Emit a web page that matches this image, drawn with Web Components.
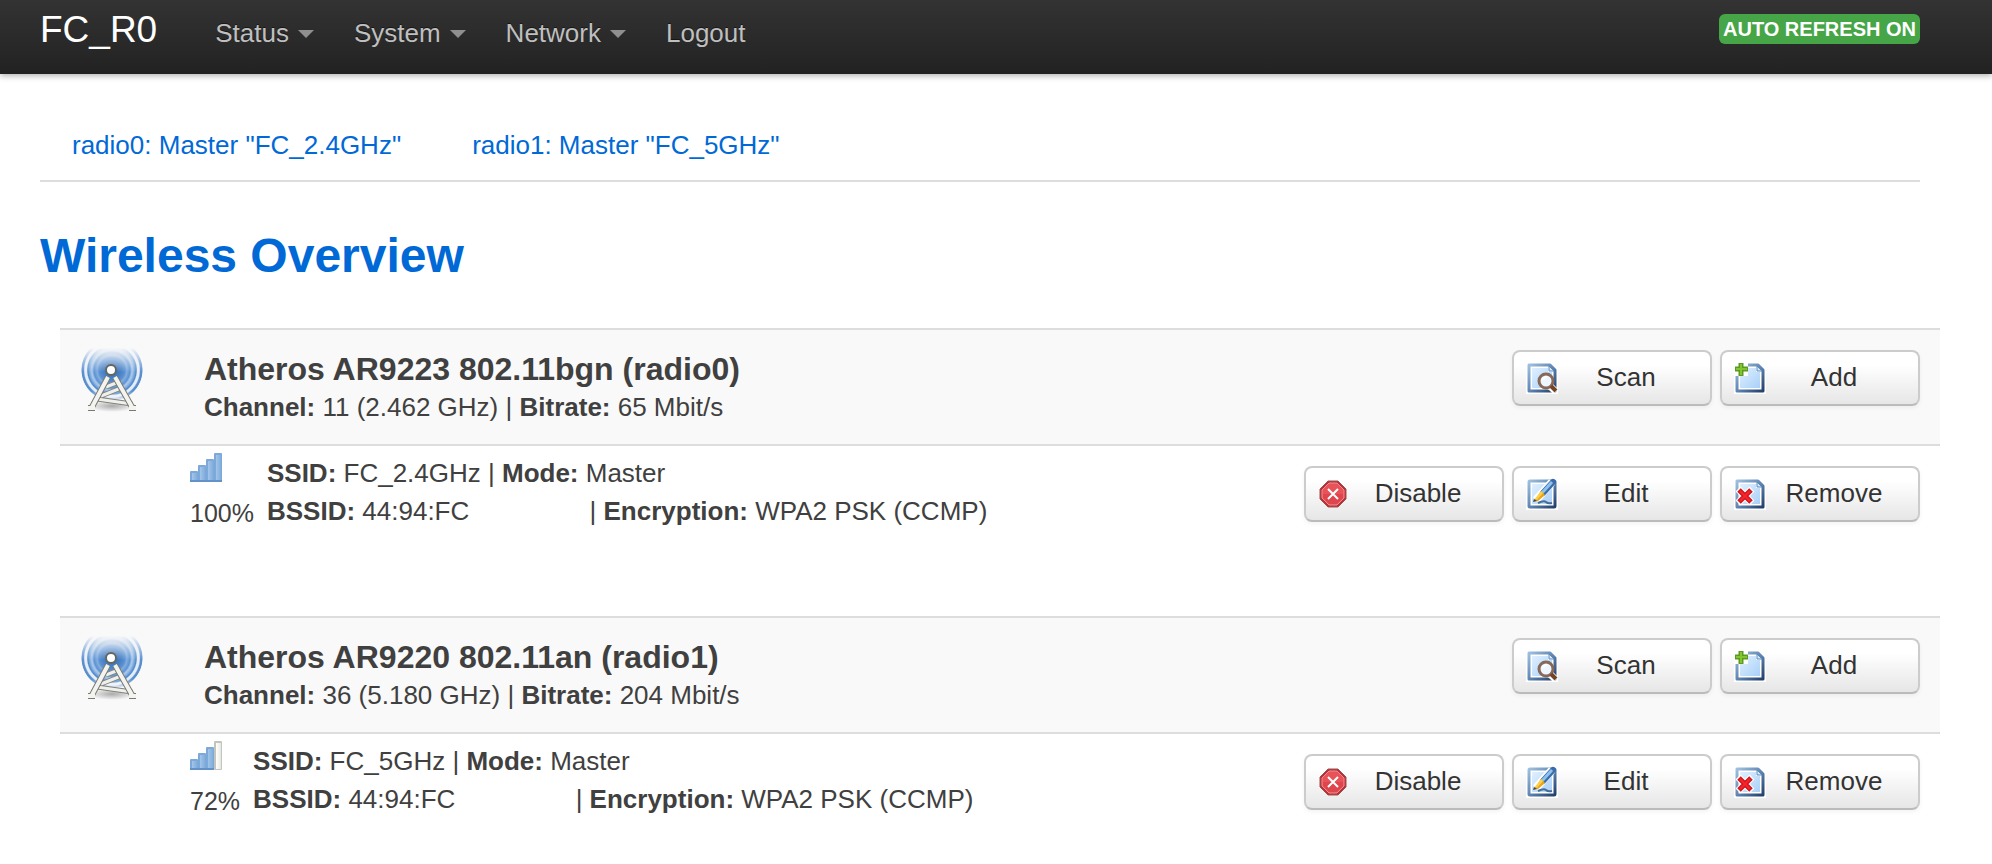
<!DOCTYPE html>
<html lang="en">
<head>
<meta charset="utf-8">
<meta name="viewport" content="width=device-width, initial-scale=1">
<title>FC_R0 - Wireless Overview</title>
<style>
  body {
    margin: 0;
    background: #fff;
    color: #404040;
    font: 26px/38px "Liberation Sans", Arial, sans-serif;
  }
  main {
    padding: 38px 72px 0 40px;
  }
  h2 {
    margin: 38px 0 36px;
    color: #0069d6;
    font-size: 48px;
    line-height: 72px;
  }
</style>
</head>
<body>

<top-bar brand="FC_R0">
  <menu-link menu>Status</menu-link>
  <menu-link menu>System</menu-link>
  <menu-link menu>Network</menu-link>
  <menu-link>Logout</menu-link>
  <refresh-label slot="status">AUTO REFRESH ON</refresh-label>
</top-bar>

<main>
  <tab-bar>
    <tab-link>radio0: Master "FC_2.4GHz"</tab-link>
    <tab-link>radio1: Master "FC_5GHz"</tab-link>
  </tab-bar>

  <h2>Wireless Overview</h2>

  <radio-device name="Atheros AR9223 802.11bgn (radio0)" channel="11 (2.462 GHz)" bitrate="65 Mbit/s">
    <wifi-network signal="100" ssid="FC_2.4GHz" mode="Master" bssid="44:94:FC" encryption="WPA2 PSK (CCMP)"></wifi-network>
  </radio-device>

  <radio-device name="Atheros AR9220 802.11an (radio1)" channel="36 (5.180 GHz)" bitrate="204 Mbit/s">
    <wifi-network signal="72" ssid="FC_5GHz" mode="Master" bssid="44:94:FC" encryption="WPA2 PSK (CCMP)"></wifi-network>
  </radio-device>
</main>

<script>
class TopBar extends HTMLElement {
  connectedCallback() {
    this.attachShadow({ mode: 'open' });
    this.shadowRoot.innerHTML = `
      <style>
        :host {
          display: block;
        }
        header {
          display: flex;
          align-items: baseline;
          box-sizing: border-box;
          height: 74px;
          padding: 14px 72px 0 40px;
          background: linear-gradient(#333, #222);
          box-shadow: 0 2px 6px rgba(0, 0, 0, 0.3);
        }
        .brand {
          margin-right: 58px;
          color: #fff;
          font-size: 37px;
          line-height: 32px;
          text-decoration: none;
        }
        nav {
          display: flex;
          gap: 40px;
          flex: 1;
        }
        slot[name="status"] {
          display: block;
          align-self: flex-start;
        }
      </style>
      <header>
        <a class="brand" href="#">${this.getAttribute('brand')}</a>
        <nav><slot></slot></nav>
        <slot name="status"></slot>
      </header>
    `;
  }
}
customElements.define('top-bar', TopBar);

class MenuLink extends HTMLElement {
  connectedCallback() {
    this.attachShadow({ mode: 'open' });
    this.shadowRoot.innerHTML = `
      <style>
        :host {
          display: block;
        }
        a {
          color: #bfbfbf;
          line-height: 32px;
          text-decoration: none;
          text-shadow: 0 -1px 0 rgba(0, 0, 0, 0.5);
        }
        a:hover {
          color: #fff;
        }
        :host([menu]) a::after {
          content: "";
          display: inline-block;
          margin-left: 9px;
          border: 8px solid transparent;
          border-top-color: #8f8f8f;
          border-bottom: 0;
          vertical-align: 4px;
        }
      </style>
      <a href="#"><slot></slot></a>
    `;
  }
}
customElements.define('menu-link', MenuLink);

class RefreshLabel extends HTMLElement {
  connectedCallback() {
    this.attachShadow({ mode: 'open' });
    this.shadowRoot.innerHTML = `
      <style>
        :host {
          display: block;
        }
        button {
          display: block;
          height: 30px;
          padding: 0 4px;
          border: 0;
          border-radius: 6px;
          background: #46a546;
          color: #fff;
          font: bold 20px/30px "Liberation Sans", Arial, sans-serif;
          white-space: nowrap;
        }
      </style>
      <button type="button"><slot></slot></button>
    `;
  }
}
customElements.define('refresh-label', RefreshLabel);

class TabBar extends HTMLElement {
  connectedCallback() {
    this.attachShadow({ mode: 'open' });
    this.shadowRoot.innerHTML = `
      <style>
        :host {
          display: block;
        }
        nav {
          display: flex;
          gap: 7px;
          border-bottom: 2px solid #ddd;
        }
      </style>
      <nav><slot></slot></nav>
    `;
  }
}
customElements.define('tab-bar', TabBar);

class TabLink extends HTMLElement {
  connectedCallback() {
    this.attachShadow({ mode: 'open' });
    this.shadowRoot.innerHTML = `
      <style>
        :host {
          display: block;
        }
        a {
          display: block;
          padding: 14px 32px 16px;
          color: #0069d6;
          text-decoration: none;
        }
      </style>
      <a href="#"><slot></slot></a>
    `;
  }
}
customElements.define('tab-link', TabLink);

// blue sheet shared by most of the button icons
const sheet = `
  <defs>
    <linearGradient id="edge" x1="0" y1="0" x2="1" y2="1">
      <stop offset="0" stop-color="#9dbfdf"/>
      <stop offset="0.5" stop-color="#5f86b3"/>
      <stop offset="1" stop-color="#24406c"/>
    </linearGradient>
    <linearGradient id="paper" x1="0" y1="0" x2="1" y2="1">
      <stop offset="0" stop-color="#e0f0ff"/>
      <stop offset="1" stop-color="#a9d0f8"/>
    </linearGradient>
  </defs>
  <rect width="32" height="32" fill="#fff"/>`;

const foldedSheet = sheet + `
  <path d="M3 3H24L29 8V29H3Z" fill="#fff" stroke="url(#edge)" stroke-width="3" stroke-linejoin="round"/>
  <path d="M6 6H22V10H26V26H6Z" fill="url(#paper)"/>
  <path d="M23 4L28 9H23Z" fill="#d6eaff" stroke="#5c8abb" stroke-width="1"/>`;

const icons = {
  scan: foldedSheet + `
    <path d="M23 23L30 30" stroke="#fff" stroke-width="7"/>
    <circle cx="20" cy="19" r="7" fill="#eef7ff" stroke="#87695a" stroke-width="3"/>
    <path d="M17 18Q18 15 21 15" fill="none" stroke="#fff" stroke-width="2"/>
    <path d="M25 24L30 29" stroke="#734426" stroke-width="4"/>`,
  add: foldedSheet + `
    <path d="M0 0H14V14H0Z" fill="#fff"/>
    <path d="M7 1V14M1 7H14" stroke="#5b9a22" stroke-width="5"/>
    <path d="M7 2V13M2 7H13" stroke="#83c52c" stroke-width="2"/>`,
  edit: sheet + `
    <rect x="3" y="3" width="26" height="26" rx="1" fill="#fff" stroke="url(#edge)" stroke-width="3"/>
    <rect x="6" y="6" width="20" height="20" fill="url(#paper)"/>
    <path d="M10 22L26 4" stroke="#fff" stroke-width="8"/>
    <path d="M17 15L27 4" stroke="#3b6ca8" stroke-width="6" stroke-linecap="round"/>
    <path d="M16 15L26 4" stroke="#8ec1ef" stroke-width="3"/>
    <path d="M8 23L15 13L19 17L12 23Z" fill="#e9a512"/>
    <path d="M9 21L15 13L17 15L11 22Z" fill="#fbd04a"/>
    <path d="M7 24L8 21L11 23Z" fill="#4d4431"/>
    <path d="M12 25Q18 22 20 24T26 25" fill="none" stroke="#456d99" stroke-width="2"/>`,
  remove: foldedSheet + `
    <path d="M4 11L18 25M18 11L4 25" stroke="#fff" stroke-width="7"/>
    <path d="M5 12L17 24M17 12L5 24" stroke="#d3141b" stroke-width="5"/>
    <path d="M6 13L16 23M16 13L6 23" stroke="#f3282d" stroke-width="2"/>`,
  disable: `
    <path d="M10 3H20L28 11V21L20 29H10L2 21V11Z" fill="#b53137" stroke="#9d5053" stroke-width="1"/>
    <path d="M11 5H19L26 12V20L19 27H11L4 20V12Z" fill="#e75358" stroke="#f18b8d" stroke-width="1"/>
    <path d="M5 16H25V20L19 26H11L5 20Z" fill="#d8383f" opacity="0.5"/>
    <path d="M10 11L20 21M20 11L10 21" stroke="#fff" stroke-width="2"/>`
};

class IconButton extends HTMLElement {
  connectedCallback() {
    this.attachShadow({ mode: 'open' });
    this.shadowRoot.innerHTML = `
      <style>
        :host {
          display: block;
        }
        button {
          display: flex;
          align-items: center;
          box-sizing: border-box;
          width: 200px;
          height: 56px;
          padding: 0 16px 0 12px;
          border: 2px solid #ccc;
          border-bottom-color: #bbb;
          border-radius: 8px;
          background: linear-gradient(#fff, #fff 25%, #e6e6e6);
          box-shadow: 0 2px 4px rgba(0, 0, 0, 0.05);
          color: #333;
          font: inherit;
          cursor: pointer;
        }
        svg {
          flex: none;
          width: 32px;
          height: 32px;
        }
        span {
          flex: 1;
          padding-bottom: 2px;
          text-align: center;
        }
      </style>
      <button type="button">
        <svg viewBox="0 0 32 32" aria-hidden="true">${icons[this.getAttribute('icon')]}</svg>
        <span><slot></slot></span>
      </button>
    `;
  }
}
customElements.define('icon-button', IconButton);

class RadioTower extends HTMLElement {
  connectedCallback() {
    // mast struts, stroked twice: dark outline, then light metal
    const bars = '<path d="M26 37L36 33M21 46L41 38M17 49L52 54"/>';
    const legs = '<path d="M28 27L12 57M35 27L52 57"/><path d="M8 58H15M49 58H56"/>';
    this.attachShadow({ mode: 'open' });
    this.shadowRoot.innerHTML = `
      <style>
        :host {
          display: block;
          flex: none;
        }
        svg {
          display: block;
          width: 64px;
          height: 64px;
          overflow: visible;
        }
      </style>
      <svg viewBox="0 0 64 64" aria-hidden="true">
        <defs>
          <radialGradient id="waves" gradientUnits="userSpaceOnUse" cx="32" cy="20" r="31">
            <stop offset="0" stop-color="#2f66ad"/>
            <stop offset="0.3" stop-color="#4a83c7"/>
            <stop offset="0.42" stop-color="#5c92d2"/>
            <stop offset="0.48" stop-color="#82aee0"/>
            <stop offset="0.58" stop-color="#5d92d1"/>
            <stop offset="0.64" stop-color="#a5c7ea"/>
            <stop offset="0.68" stop-color="#9cc1e8"/>
            <stop offset="0.78" stop-color="#4f87ca"/>
            <stop offset="0.82" stop-color="#e4eefa"/>
            <stop offset="0.88" stop-color="#e4eefa"/>
            <stop offset="0.92" stop-color="#5a8fce"/>
            <stop offset="0.97" stop-color="#5a8fce"/>
            <stop offset="1" stop-color="#5a8fce" stop-opacity="0"/>
          </radialGradient>
          <linearGradient id="fade" x1="0" y1="0" x2="0" y2="1">
            <stop offset="0.12" stop-color="#fff" stop-opacity="0"/>
            <stop offset="0.5" stop-color="#fff"/>
            <stop offset="0.8" stop-color="#fff"/>
            <stop offset="0.95" stop-color="#fff" stop-opacity="0"/>
          </linearGradient>
          <mask id="top" maskUnits="userSpaceOnUse" x="0" y="-10" width="64" height="64">
            <rect y="-10" width="64" height="64" fill="url(#fade)"/>
          </mask>
          <radialGradient id="ground">
            <stop offset="0" stop-color="#777" stop-opacity="0.6"/>
            <stop offset="1" stop-color="#777" stop-opacity="0"/>
          </radialGradient>
        </defs>
        <circle cx="32" cy="20" r="31" fill="url(#waves)" mask="url(#top)"/>
        <ellipse cx="32" cy="56" rx="24" ry="6" fill="url(#ground)"/>
        <g fill="none" stroke="#82827c" stroke-width="5">${bars}</g>
        <g fill="none" stroke="#efefeb" stroke-width="3">${bars}</g>
        <g fill="none" stroke="#7a7a74" stroke-width="6">${legs}</g>
        <g fill="none" stroke="#f3f3ef" stroke-width="4">${legs}</g>
        <circle cx="31" cy="20" r="5" fill="#fff" stroke="#66665f" stroke-width="2"/>
      </svg>
    `;
  }
}
customElements.define('radio-tower', RadioTower);

class SignalBars extends HTMLElement {
  connectedCallback() {
    const level = Math.ceil(Number(this.getAttribute('value')) / 25);
    const tops = [19, 13, 7, 1];
    // the last bar stays empty below full range
    const lit = level === 4 ? 4 : 3;
    const bars = tops.map((y, i) => {
      const x = i * 8;
      const on = i < lit;
      return `
        <rect x="${x}" y="${y}" width="8" height="${30 - y}" rx="1" fill="${on ? '#7da9da' : '#c4c4bf'}"/>
        <rect x="${x + 2}" y="${y + 2}" width="5" height="${27 - y}" fill="url(#${on ? 'on' : 'off'})"/>`;
    }).join('');
    this.attachShadow({ mode: 'open' });
    this.shadowRoot.innerHTML = `
      <style>
        :host {
          display: block;
        }
        svg {
          display: block;
          width: 32px;
          height: 32px;
        }
      </style>
      <svg viewBox="0 0 32 32" aria-hidden="true">
        <defs>
          <linearGradient id="on">
            <stop offset="0" stop-color="#a3c5e9"/>
            <stop offset="1" stop-color="#82addd"/>
          </linearGradient>
          <linearGradient id="off">
            <stop offset="0" stop-color="#fff"/>
            <stop offset="1" stop-color="#e6e6e3"/>
          </linearGradient>
        </defs>
        ${bars}
        <path d="M0 29H${lit * 8}" stroke="#6392c8" stroke-width="2"/>
      </svg>
    `;
  }
}
customElements.define('signal-bars', SignalBars);

class RadioDevice extends HTMLElement {
  connectedCallback() {
    this.attachShadow({ mode: 'open' });
    this.shadowRoot.innerHTML = `
      <style>
        :host {
          display: block;
          margin: 0 -20px 40px 20px;
        }
        :host(:last-child) {
          margin-bottom: 0;
        }
        .device {
          display: flex;
          gap: 60px;
          padding: 20px 20px 18px;
          border-top: 2px solid #ddd;
          border-bottom: 2px solid #ddd;
          background: #f9f9f9;
        }
        .info {
          flex: 1;
        }
        h3 {
          margin: 0;
          font-size: 32px;
          line-height: 38px;
        }
        p {
          margin: 0;
        }
        .actions {
          display: flex;
          align-items: flex-start;
          gap: 8px;
          height: 56px;
        }
      </style>
      <section>
        <div class="device">
          <radio-tower></radio-tower>
          <div class="info">
            <h3>${this.getAttribute('name')}</h3>
            <p><strong>Channel:</strong> ${this.getAttribute('channel')} | <strong>Bitrate:</strong> ${this.getAttribute('bitrate')}</p>
          </div>
          <div class="actions">
            <icon-button icon="scan">Scan</icon-button>
            <icon-button icon="add">Add</icon-button>
          </div>
        </div>
        <slot></slot>
      </section>
    `;
  }
}
customElements.define('radio-device', RadioDevice);

class WifiNetwork extends HTMLElement {
  connectedCallback() {
    const signal = this.getAttribute('signal');
    this.attachShadow({ mode: 'open' });
    this.shadowRoot.innerHTML = `
      <style>
        :host {
          display: flex;
          padding: 6px 20px 44px 130px;
        }
        .signal {
          display: flex;
          flex-direction: column;
          gap: 10px;
          margin-right: 13px;
          font-size: 25px;
        }
        .info {
          flex: 1;
          padding-top: 2px;
        }
        .bssid {
          display: inline-block;
          min-width: 220px;
        }
        .actions {
          display: flex;
          align-items: flex-start;
          gap: 8px;
          padding-top: 14px;
        }
      </style>
      <div class="signal">
        <signal-bars value="${signal}"></signal-bars>
        <span>${signal}%</span>
      </div>
      <div class="info">
        <div><strong>SSID:</strong> ${this.getAttribute('ssid')} | <strong>Mode:</strong> ${this.getAttribute('mode')}</div>
        <div><strong>BSSID:</strong> <span class="bssid">${this.getAttribute('bssid')}</span> | <strong>Encryption:</strong> ${this.getAttribute('encryption')}</div>
      </div>
      <div class="actions">
        <icon-button icon="disable">Disable</icon-button>
        <icon-button icon="edit">Edit</icon-button>
        <icon-button icon="remove">Remove</icon-button>
      </div>
    `;
  }
}
customElements.define('wifi-network', WifiNetwork);
</script>
</body>
</html>
